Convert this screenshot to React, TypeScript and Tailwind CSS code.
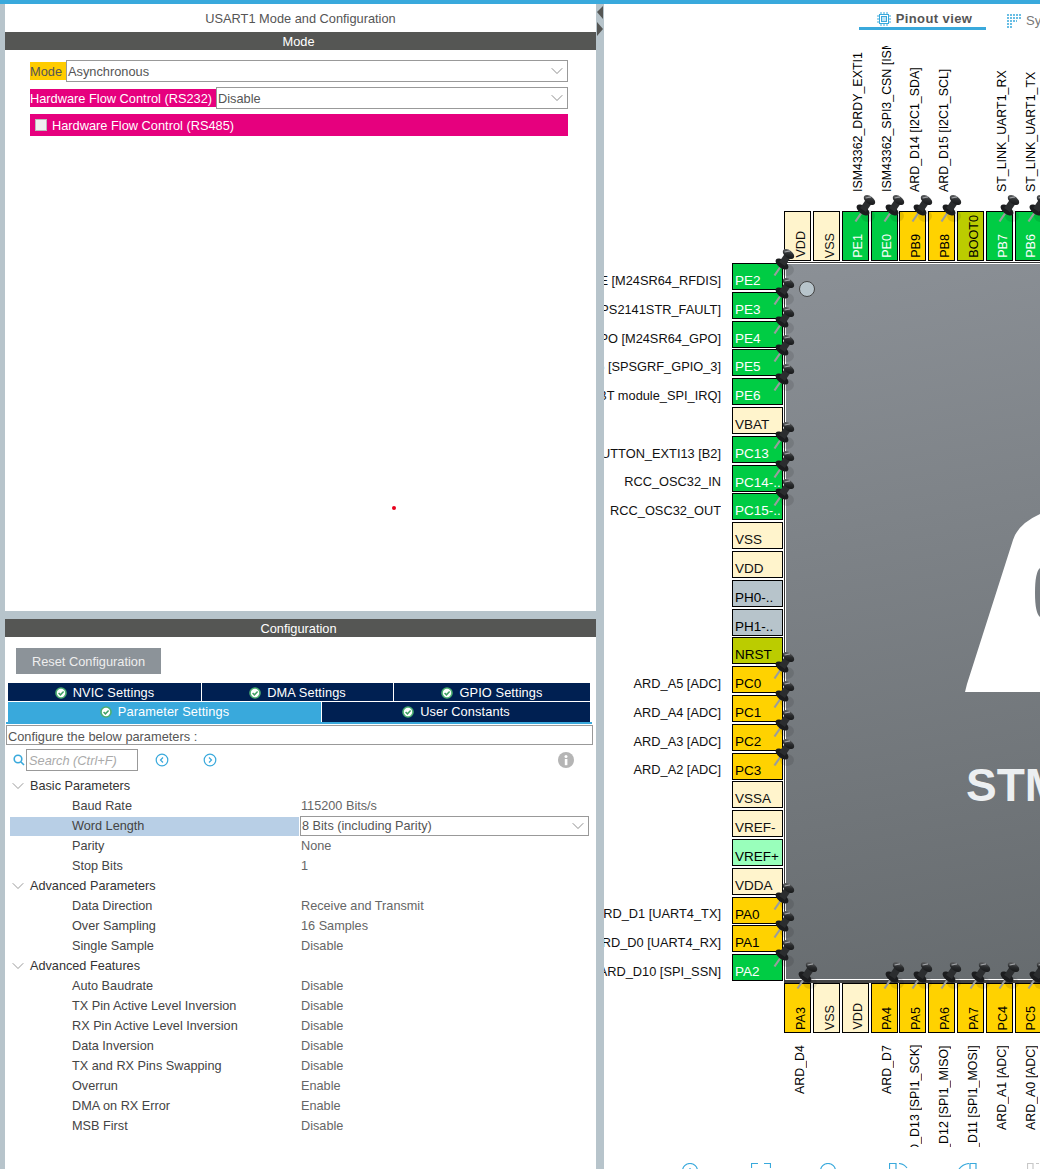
import React from 'react';
import { ChevronDown } from 'lucide-react';

type Pin = { name: string; kind: string; pin?: boolean };

const kindClass: Record<string, string> = {
  green: 'bg-[#00cc44] text-white',
  yellow: 'bg-[#ffd200] text-black',
  cream: 'bg-[#fff4cc] text-[#111]',
  olive: 'bg-[#bbcc00] text-black',
  grey: 'bg-[#b7c4cb] text-black',
  mint: 'bg-[#99ffbb] text-black',
};

const topPins: (Pin & { label?: string })[] = [
  { name: 'VDD', kind: 'cream' },
  { name: 'VSS', kind: 'cream' },
  { name: 'PE1', kind: 'green', pin: true, label: 'ISM43362_DRDY_EXTI1' },
  { name: 'PE0', kind: 'green', pin: true, label: 'ISM43362_SPI3_CSN [ISM43362_SSN]' },
  { name: 'PB9', kind: 'yellow', pin: true, label: 'ARD_D14 [I2C1_SDA]' },
  { name: 'PB8', kind: 'yellow', pin: true, label: 'ARD_D15 [I2C1_SCL]' },
  { name: 'BOOT0', kind: 'olive' },
  { name: 'PB7', kind: 'green', pin: true, label: 'ST_LINK_UART1_RX' },
  { name: 'PB6', kind: 'green', pin: true, label: 'ST_LINK_UART1_TX' },
];

const leftPins: (Pin & { label?: string })[] = [
  { name: 'PE2', kind: 'green', pin: true, label: 'M24SR64_Y_RF_DISABLE [M24SR64_RFDIS]' },
  { name: 'PE3', kind: 'green', pin: true, label: 'USB_OTG_OVCR_EXTI3 [STMPS2141STR_FAULT]' },
  { name: 'PE4', kind: 'green', pin: true, label: 'M24SR64_Y_GPO [M24SR64_GPO]' },
  { name: 'PE5', kind: 'green', pin: true, label: 'SPSGRF_915_GPIO3_EXTI5 [SPSGRF_GPIO_3]' },
  { name: 'PE6', kind: 'green', pin: true, label: 'SPBTLE_RF_IRQ_EXTI6 [BT module_SPI_IRQ]' },
  { name: 'VBAT', kind: 'cream' },
  { name: 'PC13', kind: 'green', pin: true, label: 'BUTTON_EXTI13 [B2]' },
  { name: 'PC14-..', kind: 'green', pin: true, label: 'RCC_OSC32_IN' },
  { name: 'PC15-..', kind: 'green', pin: true, label: 'RCC_OSC32_OUT' },
  { name: 'VSS', kind: 'cream' },
  { name: 'VDD', kind: 'cream' },
  { name: 'PH0-..', kind: 'grey' },
  { name: 'PH1-..', kind: 'grey' },
  { name: 'NRST', kind: 'olive' },
  { name: 'PC0', kind: 'yellow', pin: true, label: 'ARD_A5 [ADC]' },
  { name: 'PC1', kind: 'yellow', pin: true, label: 'ARD_A4 [ADC]' },
  { name: 'PC2', kind: 'yellow', pin: true, label: 'ARD_A3 [ADC]' },
  { name: 'PC3', kind: 'yellow', pin: true, label: 'ARD_A2 [ADC]' },
  { name: 'VSSA', kind: 'cream' },
  { name: 'VREF-', kind: 'cream' },
  { name: 'VREF+', kind: 'mint' },
  { name: 'VDDA', kind: 'cream' },
  { name: 'PA0', kind: 'yellow', pin: true, label: 'ARD_D1 [UART4_TX]' },
  { name: 'PA1', kind: 'yellow', pin: true, label: 'ARD_D0 [UART4_RX]' },
  { name: 'PA2', kind: 'green', pin: true, label: 'ARD_D10 [SPI_SSN]' },
];

const bottomPins: (Pin & { label?: string })[] = [
  { name: 'PA3', kind: 'yellow', pin: true, label: 'ARD_D4' },
  { name: 'VSS', kind: 'cream' },
  { name: 'VDD', kind: 'cream' },
  { name: 'PA4', kind: 'yellow', pin: true, label: 'ARD_D7' },
  { name: 'PA5', kind: 'yellow', pin: true, label: 'ARD_D13 [SPI1_SCK]' },
  { name: 'PA6', kind: 'yellow', pin: true, label: 'ARD_D12 [SPI1_MISO]' },
  { name: 'PA7', kind: 'yellow', pin: true, label: 'ARD_D11 [SPI1_MOSI]' },
  { name: 'PC4', kind: 'yellow', pin: true, label: 'ARD_A1 [ADC]' },
  { name: 'PC5', kind: 'yellow', pin: true, label: 'ARD_A0 [ADC]' },
];

type Row = { name: string; value?: string; select?: boolean };
const tree: { title: string; rows: Row[] }[] = [
  {
    title: 'Basic Parameters',
    rows: [
      { name: 'Baud Rate', value: '115200 Bits/s' },
      { name: 'Word Length', value: '8 Bits (including Parity)', select: true },
      { name: 'Parity', value: 'None' },
      { name: 'Stop Bits', value: '1' },
    ],
  },
  {
    title: 'Advanced Parameters',
    rows: [
      { name: 'Data Direction', value: 'Receive and Transmit' },
      { name: 'Over Sampling', value: '16 Samples' },
      { name: 'Single Sample', value: 'Disable' },
    ],
  },
  {
    title: 'Advanced Features',
    rows: [
      { name: 'Auto Baudrate', value: 'Disable' },
      { name: 'TX Pin Active Level Inversion', value: 'Disable' },
      { name: 'RX Pin Active Level Inversion', value: 'Disable' },
      { name: 'Data Inversion', value: 'Disable' },
      { name: 'TX and RX Pins Swapping', value: 'Disable' },
      { name: 'Overrun', value: 'Enable' },
      { name: 'DMA on RX Error', value: 'Enable' },
      { name: 'MSB First', value: 'Disable' },
    ],
  },
];

function PushPin({ className }: { className: string }) {
  return (
    <svg viewBox="0 0 26 30" className={`absolute z-10 h-[30px] w-[26px] ${className}`}>
      <defs>
        <linearGradient id="pinHead" x1="0" y1="0" x2="1" y2="1">
          <stop offset="0" stopColor="#77797b" />
          <stop offset="0.5" stopColor="#2a2c2e" />
          <stop offset="1" stopColor="#101112" />
        </linearGradient>
      </defs>
      <ellipse cx="15" cy="21" rx="7" ry="6" fill="#000" opacity="0.1" />
      <path d="M2.5 26.5 L9 17" stroke="#9a9d9e" strokeWidth="2.2" fill="none" />
      <ellipse cx="10" cy="15" rx="7.5" ry="4" transform="rotate(37 10 15)" fill="#1b1c1e" />
      <path d="M10 15 L15.5 7" stroke="#2b2d2f" strokeWidth="7" fill="none" />
      <ellipse cx="16.5" cy="5" rx="6.5" ry="3.8" transform="rotate(37 16.5 5)" fill="url(#pinHead)" />
      <path d="M12.5 3 L18 1.8" stroke="#a0a3a6" strokeWidth="1.2" fill="none" />
    </svg>
  );
}

function CheckDot() {
  return (
    <svg viewBox="0 0 12 12" className="h-3 w-3 shrink-0">
      <circle cx="6" cy="6" r="5.8" fill="#4caf72" />
      <circle cx="6" cy="6" r="4.2" fill="#fff" />
      <path d="M3.6 6 L5.4 7.8 L8.6 4.4" fill="none" stroke="#3f9f63" strokeWidth="1.5" />
    </svg>
  );
}

function Tab({ label, active, className }: { label: string; active?: boolean; className: string }) {
  return (
    <div
      className={`flex items-center justify-center gap-[6px] tracking-[0.1px] text-white ${
        active ? 'bg-[#39a9dc]' : 'bg-[#002052]'
      } ${className}`}
    >
      <CheckDot />
      {label}
    </div>
  );
}

function SelectBox({ value, className }: { value: string; className: string }) {
  return (
    <div className={`flex items-center justify-between border border-[#999] bg-white pl-[1px] text-[#555] ${className}`}>
      <span className="pt-px">{value}</span>
      <ChevronDown size={20} strokeWidth={0.8} color="#555" className="shrink-0" />
    </div>
  );
}

function PinCell({ p, side }: { p: Pin; side: 'top' | 'bottom' | 'left' }) {
  if (side === 'left') {
    return (
      <div className={`relative flex h-[27px] w-[51px] items-end overflow-visible border border-black pb-[1px] pl-[2px] text-[13.5px] leading-[15px] ${kindClass[p.kind]}`}>
        {p.name}
        {p.pin && <PushPin className="left-[39px] top-[-15px]" />}
      </div>
    );
  }
  return (
    <div className={`relative flex h-[50px] w-[27px] shrink-0 items-end justify-center border border-black pb-[2px] pl-[7px] text-[12.6px] leading-none ${kindClass[p.kind]}`}>
      <span className="rotate-180 [writing-mode:vertical-rl]">{p.name}</span>
      {p.pin && (
        <PushPin className={side === 'top' ? 'left-[10px] top-[-17px]' : 'left-[10px] top-[-22px]'} />
      )}
    </div>
  );
}

export default function App() {
  return (
    <div className="flex h-[1169px] w-[1040px] flex-col overflow-hidden bg-[#b7c4cb] text-[12.8px] font-['Liberation_Sans',Arial,sans-serif]">
      <div className="h-1 shrink-0 bg-[#39a9dc]" />
      <div className="flex min-h-0 flex-1">
        {/* left side: mode + configuration */}
        <div className="flex w-[596px] shrink-0 flex-col gap-2 pl-[5px]">
          <div className="relative h-[607px] shrink-0 bg-white">
            <div className="flex h-7 items-center justify-center pt-[2px] text-[#555]">USART1 Mode and Configuration</div>
            <div className="flex h-[18px] items-center justify-center bg-[#555654] pr-[4px] pt-px text-white">Mode</div>
            <div className="flex flex-col pl-[25px] pr-[28px] pt-[10px]">
              <div className="flex h-[22px] items-center">
                <div className="flex h-[18px] w-[36px] items-center bg-[#ffcc00] pt-px text-[#555]">Mode</div>
                <SelectBox value="Asynchronous" className="h-[22px] flex-1" />
              </div>
              <div className="mt-[5px] flex h-[22px] items-center">
                <div className="flex h-[18px] w-[186px] items-center whitespace-nowrap bg-[#e6007e] pt-px text-white">Hardware Flow Control (RS232)</div>
                <SelectBox value="Disable" className="h-[22px] flex-1" />
              </div>
              <div className="mt-[5px] flex h-[22px] items-center gap-[5px] bg-[#e6007e] pl-[5px] text-white">
                <div className="h-3 w-3 border border-[#bbb] bg-[#f0f0f0]" />
                <span className="pt-px">Hardware Flow Control (RS485)</span>
              </div>
            </div>
            <div className="absolute left-[387px] top-[502px] h-[4px] w-[4px] rounded-full bg-[#e8001c]" />
          </div>

          <div className="flex min-h-0 flex-1 flex-col bg-white">
            <div className="flex h-[18px] shrink-0 items-center justify-center bg-[#555654] pr-[4px] pt-px text-white">Configuration</div>
            <div className="pl-[11px] pt-[11px]">
              <div className="flex h-[26px] w-[145px] items-center justify-center bg-[#8c9399] pt-px text-[#eee]">Reset Configuration</div>
            </div>
            <div className="mt-[9px] flex h-[18px] gap-px pl-[3px] pr-[6px]">
              <Tab label="NVIC Settings" className="w-[193px] pt-px" />
              <Tab label="DMA Settings" className="w-[191px] pt-px" />
              <Tab label="GPIO Settings" className="flex-1 pt-px" />
            </div>
            <div className="mt-px flex h-[20px] gap-px pl-[3px] pr-[6px]">
              <Tab label="Parameter Settings" active className="w-[313px]" />
              <Tab label="User Constants" className="flex-1" />
            </div>
            <div className="ml-px mr-[4px] h-[3px] bg-[#39a9dc] [clip-path:inset(0_0_1px_0)]" />
            <div className="ml-px mr-[3px] flex h-5 items-center border border-[#999] pl-px pt-[3px] text-[#555]">Configure the below parameters :</div>
            <div className="mt-[4px] flex h-[22px] items-center">
              <svg viewBox="0 0 12 12" className="ml-[8px] h-[12px] w-[12px] shrink-0" fill="none" stroke="#39a9dc" strokeWidth="1.6">
                <circle cx="5" cy="5" r="3.8" />
                <path d="M8 8 L11 11" />
              </svg>
              <div className="ml-[1px] flex h-[22px] w-[112px] items-center border border-[#999] pl-[2px] pt-[2px] italic text-[#aaa]">Search (Ctrl+F)</div>
              <svg viewBox="0 0 14 14" className="ml-[17px] h-[14px] w-[14px]" fill="none" stroke="#39a9dc" strokeWidth="1.2">
                <circle cx="7" cy="7" r="5.8" />
                <path d="M8 4.5 L5.5 7 L8 9.5" />
              </svg>
              <svg viewBox="0 0 14 14" className="ml-[34px] h-[14px] w-[14px]" fill="none" stroke="#39a9dc" strokeWidth="1.2">
                <circle cx="7" cy="7" r="5.8" />
                <path d="M6 4.5 L8.5 7 L6 9.5" />
              </svg>
              <svg viewBox="0 0 16 16" className="ml-[341px] h-4 w-4">
                <circle cx="8" cy="8" r="8" fill="#b5b5b5" />
                <rect x="6.8" y="7" width="2.6" height="6.2" fill="#fff" />
                <circle cx="8" cy="4.4" r="1.5" fill="#fff" />
              </svg>
            </div>
            <div className="mt-[5px] flex flex-col text-[12.7px]">
              {tree.map((group) => (
                <div key={group.title} className="flex flex-col">
                  <div className="flex h-5 items-center pl-[3px] text-[#333]">
                    <ChevronDown size={20} strokeWidth={0.8} color="#666" className="mr-[2px] shrink-0" />
                    <span className="pt-[2px]">{group.title}</span>
                  </div>
                  {group.rows.map((row) => (
                    <div key={row.name} className="flex h-5 items-center">
                      <div className={`ml-[5px] flex h-[19px] w-[289px] shrink-0 items-center pl-[62px] pt-[2px] text-[#444] ${row.select ? 'bg-[#b8cfe6]' : ''}`}>
                        {row.name}
                      </div>
                      {row.select ? (
                        <SelectBox value={row.value ?? ''} className="ml-px h-5 w-[289px]" />
                      ) : (
                        <div className="pl-[2px] pt-[2px] text-[#666]">{row.value}</div>
                      )}
                    </div>
                  ))}
                </div>
              ))}
            </div>
          </div>
        </div>

        {/* splitter */}
        <div className="flex w-2 shrink-0 flex-col">
          <svg viewBox="0 0 8 32" className="mt-[2px] h-8 w-2" fill="#555654">
            <path d="M7 0 L1 6 L7 13 Z" />
            <path d="M1 16 L7 23 L1 30 Z" />
          </svg>
        </div>

        {/* right side: pinout */}
        <div className="flex min-w-0 flex-1 flex-col overflow-hidden bg-white">
          <div className="flex h-[28px] shrink-0">
            <div className="ml-[255px] flex h-[26px] w-[127px] shrink-0 items-center justify-center gap-[5px] border-b-[3px] border-[#39a9dc] pl-[4px] pt-[7px] text-[13px] font-bold tracking-[0.4px] text-[#555]">
              <svg viewBox="0 0 14 14" className="h-[14px] w-[14px]" fill="none" stroke="#39a9dc">
                <rect x="2.5" y="2.5" width="9" height="9" />
                <rect x="4.5" y="4.5" width="5" height="5" fill="#bfe3f5" />
                <path d="M4 0V2M7 0V2M10 0V2M4 12V14M7 12V14M10 12V14M0 4H2M0 7H2M0 10H2M12 4H14M12 7H14M12 10H14" />
              </svg>
              Pinout view
            </div>
            <div className="ml-[21px] flex h-[26px] shrink-0 items-center gap-[4px] whitespace-nowrap pt-[7px] text-[13px] text-[#777]">
              <svg viewBox="0 0 15 14" className="h-[14px] w-[15px]" stroke="#39a9dc" strokeWidth="1.4" strokeDasharray="2 1">
                <path d="M0 1H15M0 4H15M0 7H10M0 10H5M0 13H5" />
              </svg>
              System view
            </div>
          </div>

          {/* top labels */}
          <div className="ml-[180px] mt-[14px] flex h-[147px] shrink-0 gap-[1.85px]">
            {topPins.map((p) => (
              <div key={p.name} className="flex h-[147px] w-[27px] shrink-0 rotate-180 items-center justify-start overflow-hidden whitespace-nowrap pr-[6px] pt-px text-[12.4px] leading-none text-black [writing-mode:vertical-rl]">
                {p.label}
              </div>
            ))}
          </div>

          <div className="ml-[180px] mt-[18px] flex shrink-0 gap-[1.85px]">
            {topPins.map((p) => (
              <PinCell key={p.name} p={p} side="top" />
            ))}
          </div>

          <div className="mt-px flex h-[721px] shrink-0">
            <div className="flex w-[128px] shrink-0 flex-col gap-[1.8px] pt-px">
              {leftPins.map((p) => (
                <div key={p.name + p.kind} className="flex h-[27px] items-center pt-[8px]">
                  <div className="flex w-[117px] shrink-0 justify-end overflow-hidden whitespace-nowrap text-[12.8px] text-[#111]">{p.label}</div>
                </div>
              ))}
            </div>
            <div className="flex w-[52px] shrink-0 flex-col gap-[1.8px] pt-px">
              {leftPins.map((p) => (
                <PinCell key={p.name + p.kind} p={p} side="left" />
              ))}
            </div>
            <div className="relative h-[721px] w-[700px] shrink-0 border-b-[3px] border-l border-t border-b-[#444] border-l-[#333] border-t-[#333] bg-[linear-gradient(170deg,#8b9096,#63686b)]">
              <div className="h-full border-b border-l border-t border-white" />
              <div className="absolute left-[14px] top-[18px] h-4 w-4 rounded-full border border-[#444] bg-[#b7c4cb]" />
              <svg viewBox="0 0 76 180" className="absolute left-[179px] top-[249px] h-[180px] w-[76px]" fill="#fff">
                <path d="M1 180 L3 172 L49 28 Q54 12 76 2 L76 56 Q71 60 71 81 Q71 101 76 105 L76 180 Z" />
              </svg>
              <div className="absolute left-[181px] top-[499px] whitespace-nowrap text-[46px] font-bold leading-none text-[#eceff1]">STM32L475VGTx</div>
            </div>
          </div>

          <div className="ml-[180px] flex shrink-0 gap-[1.85px]">
            {bottomPins.map((p) => (
              <PinCell key={p.name} p={p} side="bottom" />
            ))}
          </div>

          <div className="ml-[180px] mt-[12px] flex h-[102px] shrink-0 gap-[1.85px]">
            {bottomPins.map((p) => (
              <div key={p.name} className="flex h-[102px] w-[27px] shrink-0 rotate-180 items-center justify-end overflow-hidden whitespace-nowrap pr-[5px] text-[12.4px] leading-none text-black [writing-mode:vertical-rl]">
                {p.label}
              </div>
            ))}
          </div>

          {/* zoom toolbar, cut by the window */}
          <div className="ml-[78px] mt-[16px] flex shrink-0 gap-[49px]">
            <svg viewBox="0 0 20 20" className="h-5 w-5 shrink-0" fill="none" stroke="#39a9dc" strokeWidth="1.2">
              <circle cx="8" cy="8" r="7.5" />
              <path d="M8 5V11M5 8H11" />
            </svg>
            <svg viewBox="0 0 20 20" className="h-5 w-5 shrink-0" fill="none" stroke="#39a9dc" strokeWidth="1.2">
              <path d="M0.5 5V0.5H7M13 0.5H19.5V5" />
            </svg>
            <svg viewBox="0 0 20 20" className="h-5 w-5 shrink-0" fill="none" stroke="#39a9dc" strokeWidth="1.2">
              <circle cx="8" cy="8" r="7.5" />
              <path d="M5 8H11" />
            </svg>
            <svg viewBox="0 0 20 20" className="h-5 w-5 shrink-0" fill="none" stroke="#39a9dc" strokeWidth="1.2">
              <path d="M0.5 8V0.5H7V8M10 0.5Q15 1 18 5" />
            </svg>
            <svg viewBox="0 0 20 20" className="h-5 w-5 shrink-0" fill="none" stroke="#39a9dc" strokeWidth="1.2">
              <path d="M1 6Q5 1 11 0.5M12 8V0.5H18V8" />
            </svg>
            <svg viewBox="0 0 20 20" className="h-5 w-5 shrink-0" fill="none" stroke="#c8c8c8" strokeWidth="1.2">
              <path d="M0.5 6V0.5H6V6M9 0.5H12" />
            </svg>
          </div>
        </div>
      </div>
    </div>
  );
}
